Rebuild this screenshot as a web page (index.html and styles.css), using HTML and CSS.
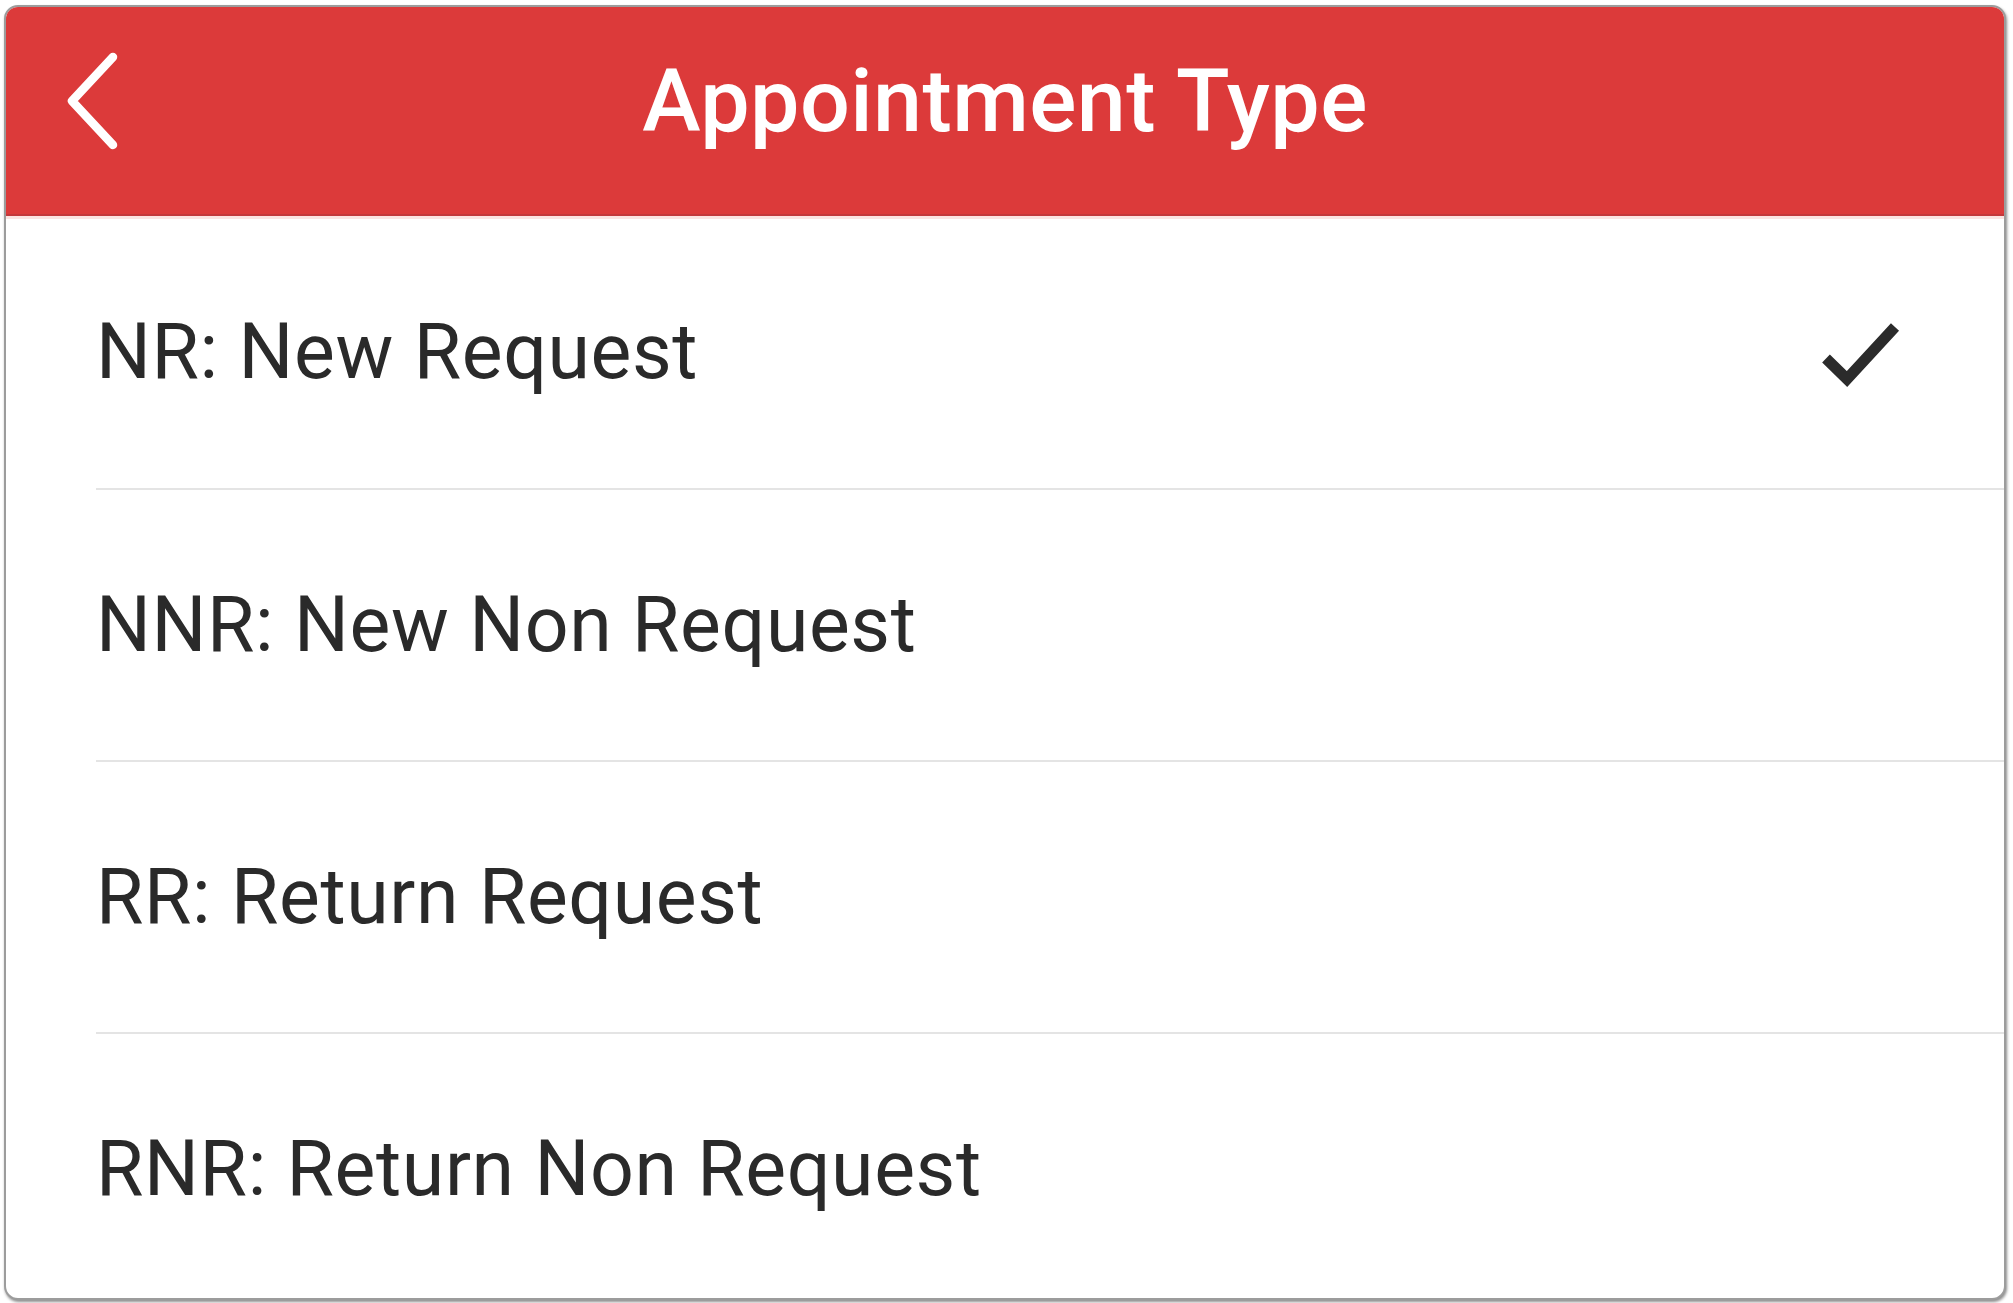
FILE: index.html
```html
<!DOCTYPE html>
<html lang="en">
<head>
    <meta charset="UTF-8">
    <meta name="viewport" content="width=device-width, initial-scale=1.0">
    <title>Appointment Type</title>
    <link rel="stylesheet" href="styles.css">
</head>
<body>
    <div class="card">
        <header class="topbar">
            <button class="back" aria-label="Back">
                <svg width="60" height="110" viewBox="0 0 60 110">
                    <path d="M53 11 L12 55 L53 99" fill="none" stroke="#fff" stroke-width="8.5" stroke-linecap="round" stroke-linejoin="round"/>
                </svg>
            </button>
            <h1 class="title">Appointment Type</h1>
            <span></span>
        </header>
        <ul class="options">
            <li class="option selected">
                <span>NR: New Request</span>
                <svg class="check" width="90" height="70" viewBox="0 0 90 70">
                    <path d="M11 41.5 L32 62 L80 10" fill="none" stroke="#2b2b2b" stroke-width="11"/>
                </svg>
            </li>
            <li class="option"><span>NNR: New Non Request</span></li>
            <li class="option"><span>RR: Return Request</span></li>
            <li class="option"><span>RNR: Return Non Request</span></li>
        </ul>
    </div>
</body>
</html>
```

FILE: styles.css
```css
body {
    margin: 0;
    padding: 5px 7px 7px 4px;
    background-color: #fff;
    font-family: Roboto, "Liberation Sans", sans-serif;
    height: 100vh;
    box-sizing: border-box;
}
.card {
    height: 100%;
    border: 2px solid #9c9c9c;
    border-radius: 14px;
    box-shadow: 1px 2px 3px rgba(0, 0, 0, 0.45);
    overflow: hidden;
    background-color: #fff;
}
.topbar {
    display: grid;
    grid-template-columns: 1fr auto 1fr;
    align-items: center;
    height: 209px;
    box-sizing: border-box;
    padding-bottom: 20px;
    background-color: #dc3a3a;
    border-bottom: 2px solid #c3383b;
    box-shadow: 0 3px 0 #fbe4e2;
}
.back {
    justify-self: start;
    margin-left: 54px;
    padding: 0;
    border: none;
    background: none;
    display: flex;
}
.title {
    margin: 0;
    color: #fff;
    font-size: 88px;
    font-weight: 500;
    letter-spacing: 0.4px;
}
.options {
    list-style: none;
    margin: 0;
    padding: 0;
}
.option {
    display: flex;
    align-items: center;
    justify-content: space-between;
    height: 272px;
    box-sizing: border-box;
    margin-left: 90px;
    border-bottom: 2px solid #e4e4e4;
    color: #2a2a2a;
    font-size: 77px;
    letter-spacing: 0.6px;
}
.option:first-child {
    height: 274px;
}
.check {
    margin-right: 99px;
}
```
